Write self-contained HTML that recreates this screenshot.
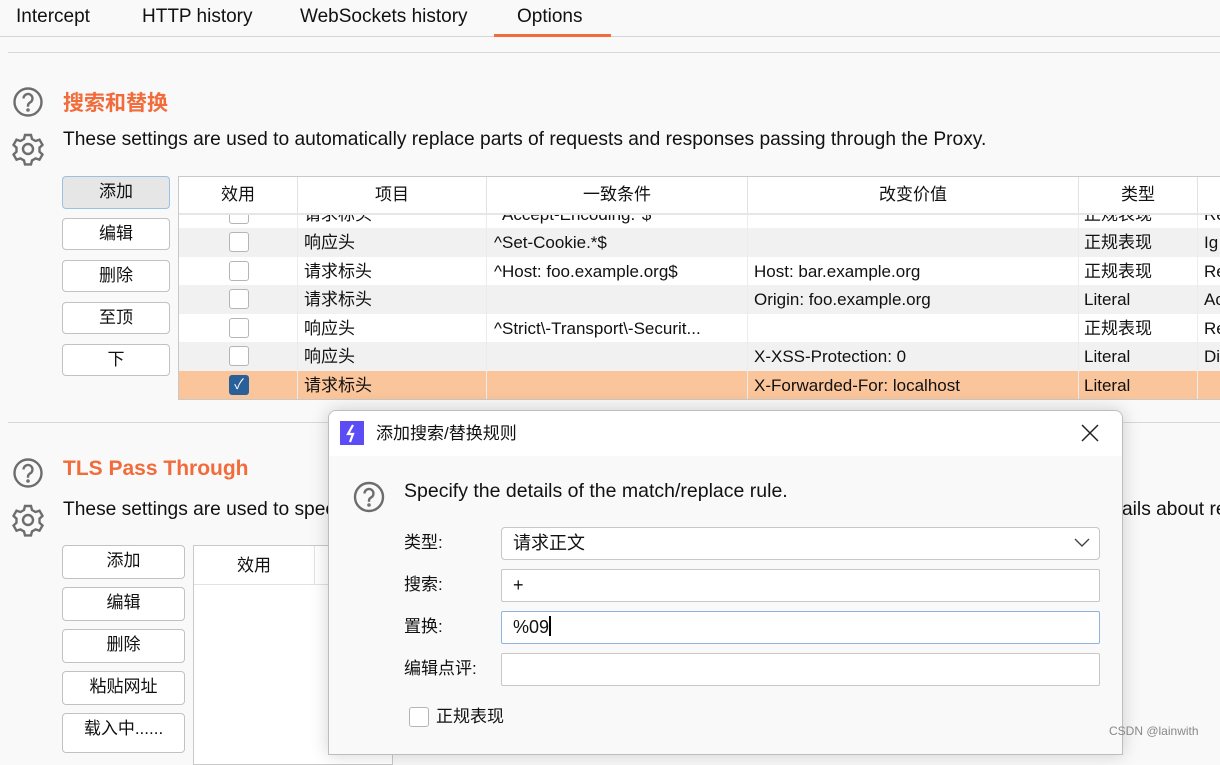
<!DOCTYPE html>
<html><head><meta charset="utf-8"><style>
*{box-sizing:border-box;margin:0;padding:0}
body{width:1220px;height:747px;overflow:hidden;background:#f9f9f9;font-family:"Liberation Sans","Noto Sans CJK SC",sans-serif;font-size:19.2px;color:#111;position:relative}
.a{position:absolute;white-space:nowrap}
.tab{position:absolute;top:6px;font-size:19px}
.btn{position:absolute;border:1px solid #c4c0c2;border-radius:4px;background:#fff;text-align:center;font-size:17px;line-height:30px}
.h{color:#f26b3a;font-weight:bold;font-size:21px}
.tbl{position:absolute;border:1px solid #c9c9c9;background:#fff;overflow:hidden}
.hd{position:absolute;top:0;height:37px;border-right:1px solid #e2e2e2;text-align:center;line-height:36px;background:#fff;font-size:17px}
.row{position:absolute;left:0;right:0;height:28.5px;line-height:28px}
.c{position:absolute;top:1px;font-size:17px;line-height:28px;height:28px}
.cb{position:absolute;left:50px;top:4px;width:20px;height:20px;border:1.5px solid #b5b5b5;border-radius:3px;background:#fff}
.vl{position:absolute;top:37px;bottom:0;width:1px;background:#ececec}
.inp{position:absolute;left:501px;width:599px;height:33px;border:1.5px solid #c8c6c8;background:#fff;border-radius:2px;font-size:18px;padding:0 11px;line-height:30px}
.lbl{position:absolute;left:404px;font-size:17px;line-height:24px}
</style></head><body>
<div class="tab" style="left:16px">Intercept</div>
<div class="tab" style="left:142px">HTTP history</div>
<div class="tab" style="left:300px">WebSockets history</div>
<div class="tab" style="left:517px">Options</div>
<div class="a" style="left:0;top:36px;width:1220px;height:1px;background:#d5d5d5"></div>
<div class="a" style="left:494px;top:34px;width:117px;height:3px;background:#f26b3a"></div>
<div class="a" style="left:8px;top:52px;width:1212px;height:1px;background:#d8d8d8"></div>

<svg class="a" style="left:12px;top:86px" width="34" height="80" viewBox="0 0 34 80" fill="none" stroke="#6d6d6d" stroke-width="2.4">
<circle cx="16" cy="16" r="13.5"/><path d="M11.5 12.5a4.5 4.5 0 1 1 6.5 4c-1.5.8-2 1.6-2 3.2v1"/><circle cx="16" cy="24" r="0.6" fill="#6d6d6d"/>
<g transform="translate(16,63)"><path d="M-3-14h6l1 4 3.5 2 4-1.3 3 5.2-3 2.8v4l3 2.8-3 5.2-4-1.3-3.5 2-1 4h-6l-1-4-3.5-2-4 1.3-3-5.2 3-2.8v-4l-3-2.8 3-5.2 4 1.3 3.5-2z"/><circle r="5"/></g>
</svg>
<div class="a h" style="left:63px;top:87px">搜索和替换</div>
<div class="a" style="left:63px;top:129px">These settings are used to automatically replace parts of requests and responses passing through the Proxy.</div>

<div class="btn" style="left:62px;top:176px;width:108px;height:33px;background:#e6e6e6;border-color:#9cc0e4">添加</div>
<div class="btn" style="left:62px;top:218px;width:108px;height:32px">编辑</div>
<div class="btn" style="left:62px;top:260px;width:108px;height:32px">删除</div>
<div class="btn" style="left:62px;top:302px;width:108px;height:32px">至顶</div>
<div class="btn" style="left:62px;top:344px;width:108px;height:32px">下</div>

<div class="tbl" style="left:178px;top:176px;width:1050px;height:224px">
 <div class="row" style="top:22.5px;background:#fff"><div class="cb"></div><div class="c" style="left:125px">请求标头</div><div class="c" style="left:315px">^Accept-Encoding.*$</div><div class="c" style="left:905px">正规表现</div><div class="c" style="left:1025px">Re</div></div>
 <div class="row" style="top:51px;background:#f1f1f1"><div class="cb"></div><div class="c" style="left:125px">响应头</div><div class="c" style="left:315px">^Set-Cookie.*$</div><div class="c" style="left:905px">正规表现</div><div class="c" style="left:1025px">Ig</div></div>
 <div class="row" style="top:79.5px;background:#fff"><div class="cb"></div><div class="c" style="left:125px">请求标头</div><div class="c" style="left:315px">^Host: foo.example.org$</div><div class="c" style="left:575px">Host: bar.example.org</div><div class="c" style="left:905px">正规表现</div><div class="c" style="left:1025px">Re</div></div>
 <div class="row" style="top:108px;background:#f1f1f1"><div class="cb"></div><div class="c" style="left:125px">请求标头</div><div class="c" style="left:575px">Origin: foo.example.org</div><div class="c" style="left:905px">Literal</div><div class="c" style="left:1025px">Ac</div></div>
 <div class="row" style="top:136.5px;background:#fff"><div class="cb"></div><div class="c" style="left:125px">响应头</div><div class="c" style="left:315px">^Strict\-Transport\-Securit...</div><div class="c" style="left:905px">正规表现</div><div class="c" style="left:1025px">Re</div></div>
 <div class="row" style="top:165px;background:#f1f1f1"><div class="cb"></div><div class="c" style="left:125px">响应头</div><div class="c" style="left:575px">X-XSS-Protection: 0</div><div class="c" style="left:905px">Literal</div><div class="c" style="left:1025px">Di</div></div>
 <div class="row" style="top:193.5px;background:#fac59a"><div class="cb" style="background:#2a6099;border-color:#2a6099;color:#fff;font-size:14px;line-height:17px;text-align:center">✓</div><div class="c" style="left:125px">请求标头</div><div class="c" style="left:575px">X-Forwarded-For: localhost</div><div class="c" style="left:905px">Literal</div></div>
 <div class="vl" style="left:118px"></div><div class="vl" style="left:307px"></div><div class="vl" style="left:568px"></div><div class="vl" style="left:899px"></div><div class="vl" style="left:1018px"></div>
 <div class="hd" style="left:0;width:119px">效用</div>
 <div class="hd" style="left:119px;width:189px">项目</div>
 <div class="hd" style="left:308px;width:261px">一致条件</div>
 <div class="hd" style="left:569px;width:331px">改变价值</div>
 <div class="hd" style="left:900px;width:119px">类型</div>
 <div class="hd" style="left:1019px;width:40px"></div>
 <div class="a" style="left:0;top:36px;width:1050px;height:2px;background:#e6e6e6"></div>
</div>

<div class="a" style="left:8px;top:422px;width:1212px;height:1px;background:#d8d8d8"></div>
<svg class="a" style="left:12px;top:457px" width="34" height="80" viewBox="0 0 34 80" fill="none" stroke="#6d6d6d" stroke-width="2.4">
<circle cx="16" cy="16" r="13.5"/><path d="M11.5 12.5a4.5 4.5 0 1 1 6.5 4c-1.5.8-2 1.6-2 3.2v1"/><circle cx="16" cy="24" r="0.6" fill="#6d6d6d"/>
<g transform="translate(16,63)"><path d="M-3-14h6l1 4 3.5 2 4-1.3 3 5.2-3 2.8v4l3 2.8-3 5.2-4-1.3-3.5 2-1 4h-6l-1-4-3.5-2-4 1.3-3-5.2 3-2.8v-4l-3-2.8 3-5.2 4 1.3 3.5-2z"/><circle r="5"/></g>
</svg>
<div class="a h" style="left:63px;top:457px">TLS Pass Through</div>
<div class="a" style="left:63px;top:499px">These settings are used to spec</div>
<div class="a" style="left:1122px;top:499px">ails about re</div>
<div class="btn" style="left:62px;top:545px;width:123px;height:34px">添加</div>
<div class="btn" style="left:62px;top:587px;width:123px;height:34px">编辑</div>
<div class="btn" style="left:62px;top:629px;width:123px;height:34px">删除</div>
<div class="btn" style="left:62px;top:671px;width:123px;height:34px">粘贴网址</div>
<div class="btn" style="left:62px;top:713px;width:123px;height:40px">载入中......</div>
<div class="tbl" style="left:193px;top:545px;width:200px;height:220px">
 <div class="hd" style="left:0;width:121px;height:39px;line-height:40px">效用</div>
 <div class="a" style="left:0;top:38px;width:200px;height:1px;background:#e2e2e2"></div>
</div>

<div class="a" style="left:328px;top:410px;width:795px;height:345px;border:1px solid #bdbdbd;border-radius:8px 8px 0 0;background:#f9f9f9;box-shadow:0 0 18px rgba(0,0,0,.18);overflow:hidden">
 <div class="a" style="left:0;top:0;width:795px;height:45px;background:#fff"></div>
 <div class="a" style="left:11px;top:10px;width:24px;height:24px;background:#5b4cf5"></div>
 <svg class="a" style="left:11px;top:10px" width="24" height="24"><path d="M13 4 8 13h5l-3 8" stroke="#fff" stroke-width="2.2" fill="none"/></svg>
 <div class="a" style="left:47px;top:11px;font-size:17px;line-height:24px">添加搜索/替换规则</div>
 <svg class="a" style="left:751px;top:12px" width="20" height="20"><path d="M2 2 18 18M18 2 2 18" stroke="#222" stroke-width="1.5"/></svg>
</div>
<svg class="a" style="left:353px;top:481px" width="34" height="34" fill="none" stroke="#6d6d6d" stroke-width="2.4"><circle cx="16" cy="16" r="14"/><path d="M11.5 12.5a4.5 4.5 0 1 1 6.5 4c-1.5.8-2 1.6-2 3.2v1"/><circle cx="16" cy="24" r="0.6" fill="#6d6d6d"/></svg>
<div class="a" style="left:404px;top:480px;font-size:19.5px">Specify the details of the match/replace rule.</div>
<div class="lbl" style="top:531px">类型:</div>
<div class="lbl" style="top:573px">搜索:</div>
<div class="lbl" style="top:615px">置换:</div>
<div class="lbl" style="top:657px">编辑点评:</div>
<div class="inp" style="top:527px;border-radius:4px">请求正文<svg style="position:absolute;right:9px;top:10px" width="16" height="10"><path d="M1 1l7 7 7-7" stroke="#444" stroke-width="1.4" fill="none"/></svg></div>
<div class="inp" style="top:569px">+</div>
<div class="inp" style="top:611px;border-color:#8db4e2">%09<span style="display:inline-block;width:2px;height:20px;background:#000;vertical-align:-3px"></span></div>
<div class="inp" style="top:653px"></div>
<div class="a" style="left:409px;top:707px;width:20px;height:20px;border:1.5px solid #b5b5b5;border-radius:3px;background:#fff"></div>
<div class="a" style="left:436px;top:705px;font-size:17px;line-height:24px">正规表现</div>
<div class="a" style="left:1109px;top:724px;font-size:12px;color:#888">CSDN @lainwith</div>
</body></html>
